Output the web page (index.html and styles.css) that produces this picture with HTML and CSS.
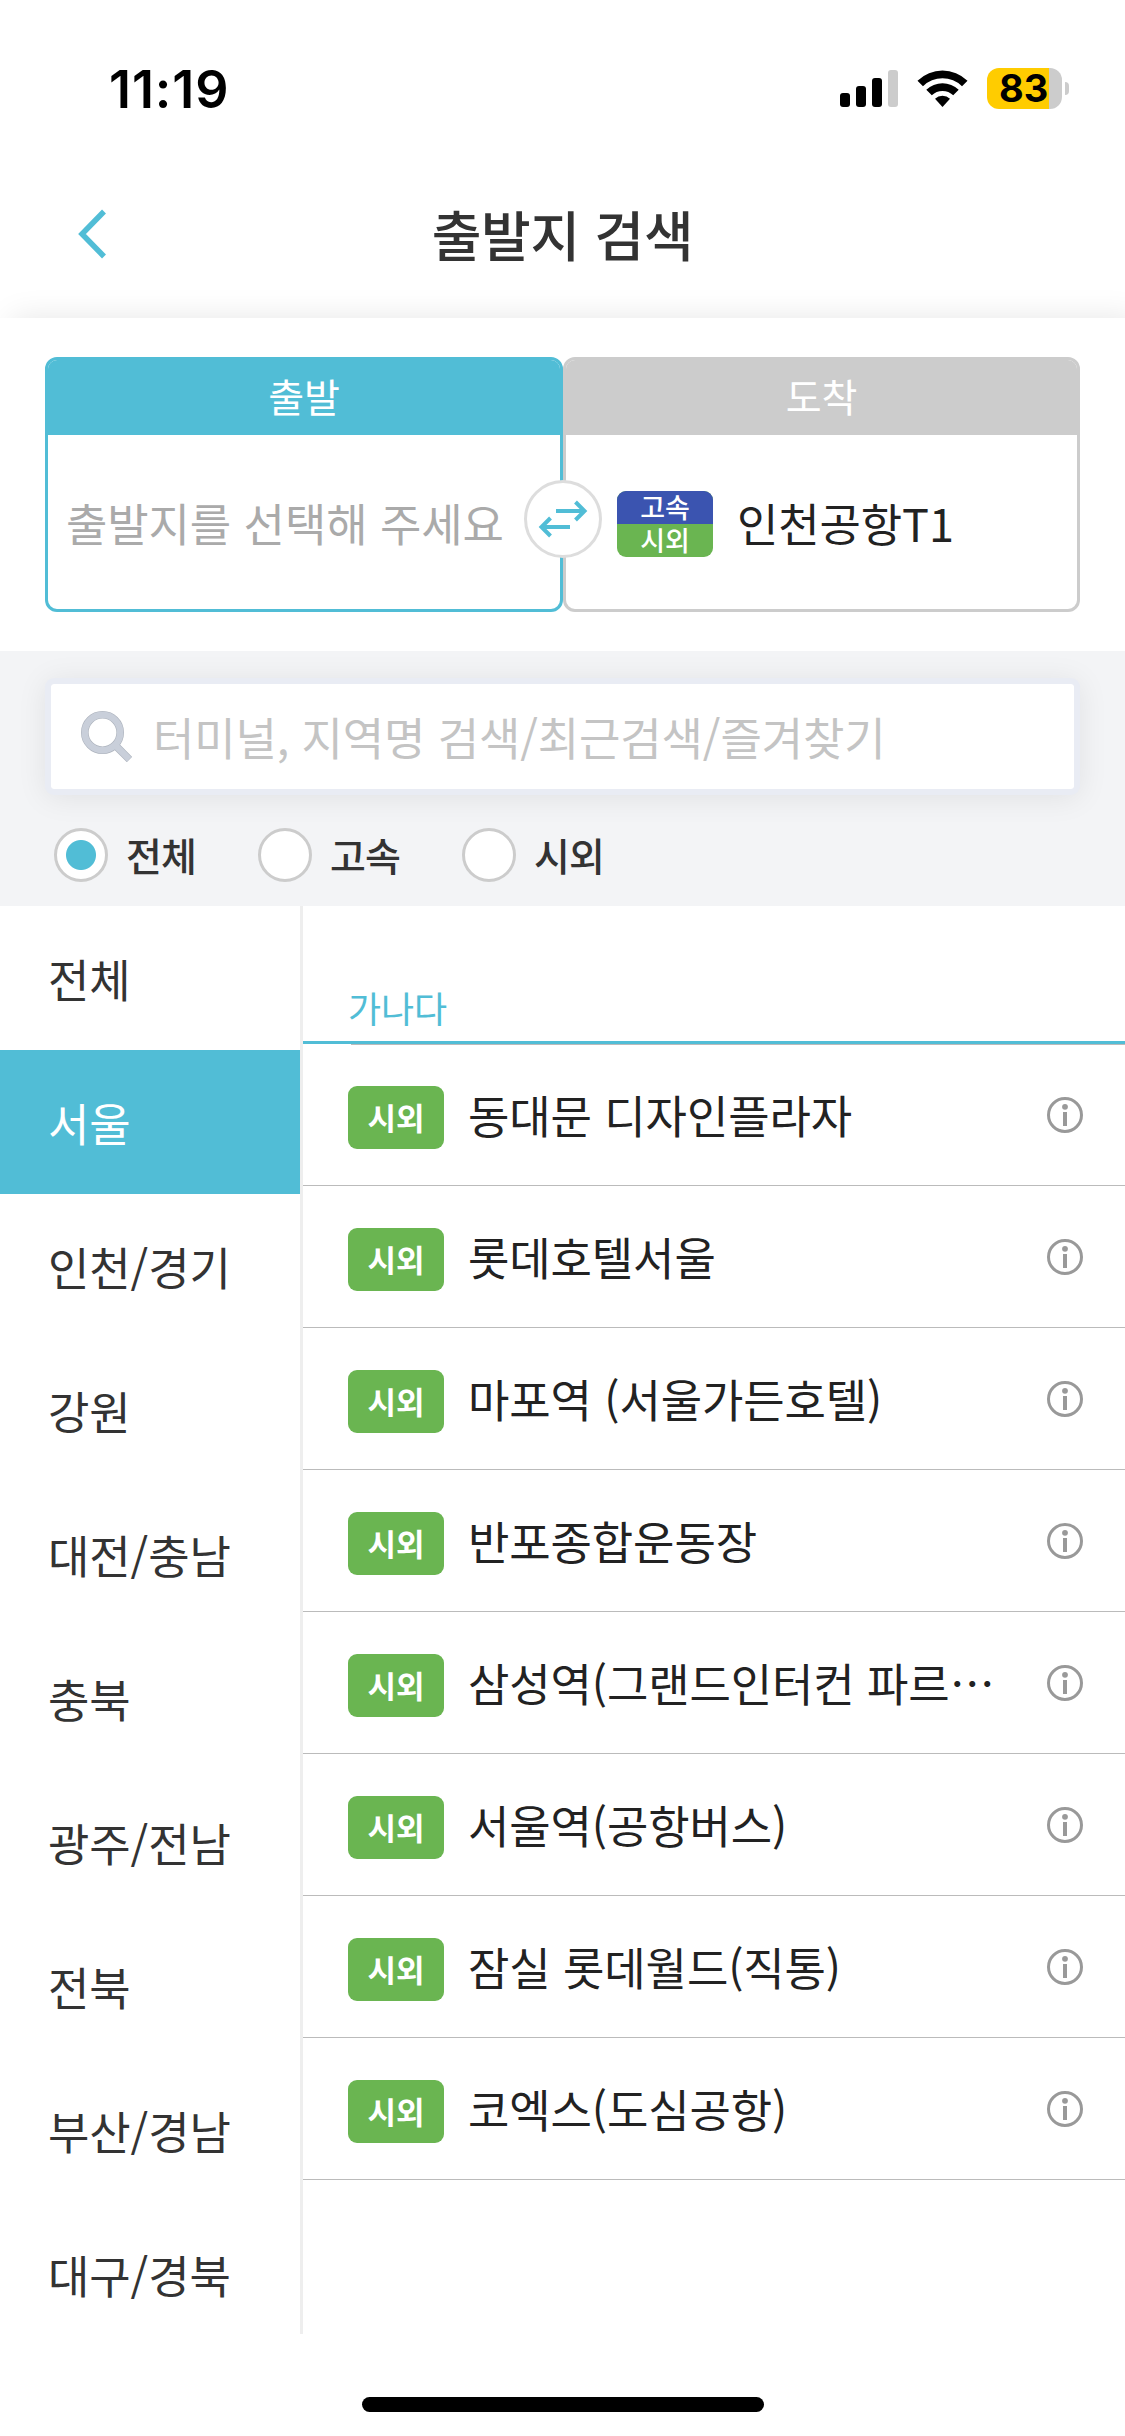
FILE: index.html
```html
<!DOCTYPE html>
<html lang="ko">
<head>
<meta charset="utf-8">
<title>출발지 검색</title>
<link rel="stylesheet" href="styles.css">
</head>
<body>
<svg class="defs" width="0" height="0">
  <symbol id="info" viewBox="0 0 36 36">
    <circle cx="18" cy="18" r="16.5" fill="none" stroke="#999" stroke-width="3"/>
    <circle cx="18" cy="9.8" r="2.9" fill="#999"/>
    <rect x="16" y="15" width="4" height="14" fill="#999"/>
  </symbol>
</svg>
<div class="screen">
  <div class="status">
    <span class="time">11:19</span>
    <div class="status-icons">
      <svg width="58" height="37" viewBox="0 0 58 37">
        <rect x="0" y="23" width="10" height="14" rx="3"/>
        <rect x="16" y="16" width="10" height="21" rx="3"/>
        <rect x="32" y="8" width="10" height="29" rx="3"/>
        <rect x="48" y="0" width="10" height="37" rx="3" fill="#ccc"/>
      </svg>
      <svg class="wifi" width="51" height="37" viewBox="0 0 51 37">
        <path d="M0.5 10.7A36 36 0 0 1 50.5 10.7L45 16.2A28 28 0 0 0 6 16.2Z"/>
        <path d="M9.3 19.8A23.5 23.5 0 0 1 41.7 19.8L36.2 25.2A15.5 15.5 0 0 0 14.8 25.2Z"/>
        <path d="M18 28.8A11 11 0 0 1 33 28.8L25.5 37Z"/>
      </svg>
      <div class="battery"><span>83</span></div>
      <i class="nub"></i>
    </div>
  </div>
  <header class="titlebar">
    <svg class="back" width="30" height="50" viewBox="0 0 30 50"><path d="M27 2.5L5 25L27 47.500" fill="none" stroke="#51bdd6" stroke-width="5.500"/></svg>
    <h1>출발지 검색</h1>
  </header>
  <section class="route">
    <div class="stop from">
      <div class="stop-head">출발</div>
      <div class="stop-body"><span class="empty">출발지를 선택해 주세요</span></div>
    </div>
    <div class="stop to">
      <div class="stop-head">도착</div>
      <div class="stop-body">
        <div class="duo"><span>고속</span><span>시외</span></div>
        <span class="place">인천공항T1</span>
      </div>
    </div>
    <button class="swap">
      <svg width="50" height="38" viewBox="0 0 50 38" fill="none" stroke="#51bdd6" stroke-width="4"><path d="M18 11H47M37.500 2L46.500 11L37.500 20M32 27H3M12.500 18L3.500 27L12.500 36"/></svg>
    </button>
  </section>
  <section class="finder">
    <div class="search">
      <svg width="51" height="51" viewBox="0 0 51 51" fill="none">
        <g stroke="#adb3bd" stroke-width="7.600"><circle cx="21.500" cy="21.500" r="17.700"/><path d="M34.500 34.500L48.500 48.500"/></g>
        <g stroke="#c9cfda" stroke-width="6.400"><circle cx="21.500" cy="21.500" r="17.700"/><path d="M33.500 33.500L48.200 48.200"/></g>
      </svg>
      <span>터미널, 지역명 검색/최근검색/즐겨찾기</span>
    </div>
    <div class="filters">
      <label class="filter on"><i></i><span>전체</span></label>
      <label class="filter"><i></i><span>고속</span></label>
      <label class="filter"><i></i><span>시외</span></label>
    </div>
  </section>
  <main class="browse">
    <nav class="regions">
      <a>전체</a><a class="active">서울</a><a>인천/경기</a><a>강원</a><a>대전/충남</a><a>충북</a><a>광주/전남</a><a>전북</a><a>부산/경남</a><a>대구/경북</a>
    </nav>
    <div class="list">
      <div class="group"><span>가나다</span></div>
      <ul>
        <li><b>시외</b><span>동대문 디자인플라자</span><svg><use href="#info"/></svg></li>
        <li><b>시외</b><span>롯데호텔서울</span><svg><use href="#info"/></svg></li>
        <li><b>시외</b><span>마포역 (서울가든호텔)</span><svg><use href="#info"/></svg></li>
        <li><b>시외</b><span>반포종합운동장</span><svg><use href="#info"/></svg></li>
        <li><b>시외</b><span>삼성역(그랜드인터컨 파르…</span><svg><use href="#info"/></svg></li>
        <li><b>시외</b><span>서울역(공항버스)</span><svg><use href="#info"/></svg></li>
        <li><b>시외</b><span>잠실 롯데월드(직통)</span><svg><use href="#info"/></svg></li>
        <li><b>시외</b><span>코엑스(도심공항)</span><svg><use href="#info"/></svg></li>
      </ul>
    </div>
  </main>
  <footer class="home"><i></i></footer>
</div>
</body>
</html>
```
FILE: styles.css
```css
* { box-sizing: border-box; margin: 0; padding: 0; }
body { background: #fff; color: #333; font-family: "Noto Sans CJK KR", sans-serif; font-size: 45px; line-height: 1; letter-spacing: -0.12px; }
.defs { display: block; }
.screen { width: 1125px; height: 2436px; display: flex; flex-direction: column; overflow: hidden; }
svg { display: block; flex: none; }
i { display: block; flex: none; }

.status { height: 168px; display: flex; justify-content: space-between; padding: 68px 56px 0 109px; color: #000; font-family: Inter, sans-serif; letter-spacing: 0; }
.time { font-size: 52px; font-weight: 600; line-height: 44px; letter-spacing: 0.9px; }
.status-icons { display: flex; align-items: center; height: 41px; }
.wifi { margin-left: 19px; }
.battery { width: 75px; height: 41px; margin-left: 19px; border-radius: 12px; background: linear-gradient(90deg, #fc0 62px, #ccc 62px); padding-left: 12px; font-size: 38px; font-weight: 700; line-height: 41px; }
.nub { width: 4px; height: 13px; margin-left: 3px; background: #ccc; border-radius: 0 4px 4px 0; }

.titlebar { height: 150px; display: grid; grid-template-columns: 200px 1fr 200px; padding-top: 33px; align-items: start; }
.back { margin: 8px 0 0 77px; }
.titlebar h1 { font-size: 54px; font-weight: 500; line-height: 66px; text-align: center; letter-spacing: -0.3px; }

.route { position: relative; height: 333px; display: flex; padding: 39px 45px; background: #fff; box-shadow: 12px 0 30px rgba(0,0,0,.1); }
.stop { height: 255px; border: 3px solid #ccc; border-radius: 12px; overflow: hidden; }
.from { width: 518px; border-color: #51bdd6; }
.to { width: 517px; }
.stop-head { height: 75px; line-height: 70px; text-align: center; color: #fff; font-size: 39px; background: #ccc; }
.from .stop-head { background: #51bdd6; }
.stop-body { height: 174px; display: flex; align-items: center; }
.from .stop-body { padding-left: 18px; }
.to .stop-body { padding-left: 51px; gap: 24px; }
.empty { color: #aaa; }
.place { color: #222; }
.duo { width: 96px; height: 66px; margin-top: 4px; border-radius: 9px; overflow: hidden; background: #6ab551; color: #fff; font-size: 27px; font-weight: 500; text-align: center; }
.duo span { display: block; height: 33px; line-height: 31px; }
.duo span:first-child { background: #3b54b0; }
.swap { position: absolute; left: 524px; top: 162px; width: 78px; height: 78px; border: 3px solid #ddd; border-radius: 50%; background: #fff; display: flex; align-items: center; justify-content: center; }

.finder { position: relative; height: 255px; padding: 27px 45px 0; background: #f3f4f6; overflow: hidden; }
.search { height: 117px; display: flex; align-items: center; gap: 21px; padding-left: 30px; border: 6px solid #e9ecf4; border-radius: 9px; background: #fff; background-clip: padding-box; color: #c4c4c4; box-shadow: 0 3px 30px rgba(0,0,0,.08); }
.search span { letter-spacing: -0.15px; }
.filters { display: flex; gap: 60px; padding: 33px 0 0 9px; }
.filter { display: flex; align-items: center; width: 144px; gap: 18px; font-size: 39px; font-weight: 500; white-space: nowrap; }
.filter span { margin-bottom: 2px; letter-spacing: -0.8px; }
.filter i { width: 54px; height: 54px; border: 3px solid #ccc; border-radius: 50%; background: #fff; }
.filter.on i { background: radial-gradient(circle, #51bdd6 14.5px, #fff 15.5px); }

.browse { height: 1428px; display: flex; overflow: hidden; }
.regions { width: 303px; border-right: 3px solid #eee; }
.regions a { display: block; height: 144px; line-height: 145px; padding-left: 48px; }
.regions .active { background: #51bdd6; color: #fff; }
.list { flex: 1; }
.group { height: 138px; display: flex; align-items: flex-end; padding: 0 0 14px 45px; border-bottom: 3px solid #51bdd6; color: #51bdd6; font-size: 36px; line-height: 40px; }
ul { list-style: none; background: linear-gradient(#bbb, #bbb) 48px 0 / 100% 1px no-repeat; }
li { height: 142px; display: flex; align-items: center; padding: 0 42px 0 45px; border-bottom: 1px solid #bbb; color: #222; }
li b { width: 96px; height: 63px; margin-top: 6px; border-radius: 9px; background: #6ab551; color: #fff; font-size: 31px; font-weight: 700; line-height: 62px; text-align: center; }
li span { flex: 1; margin-left: 24px; white-space: nowrap; }
li svg { width: 36px; height: 36px; }

.home { display: flex; justify-content: center; padding-top: 63px; }
.home i { width: 402px; height: 15px; border-radius: 8px; background: #000; }
```
